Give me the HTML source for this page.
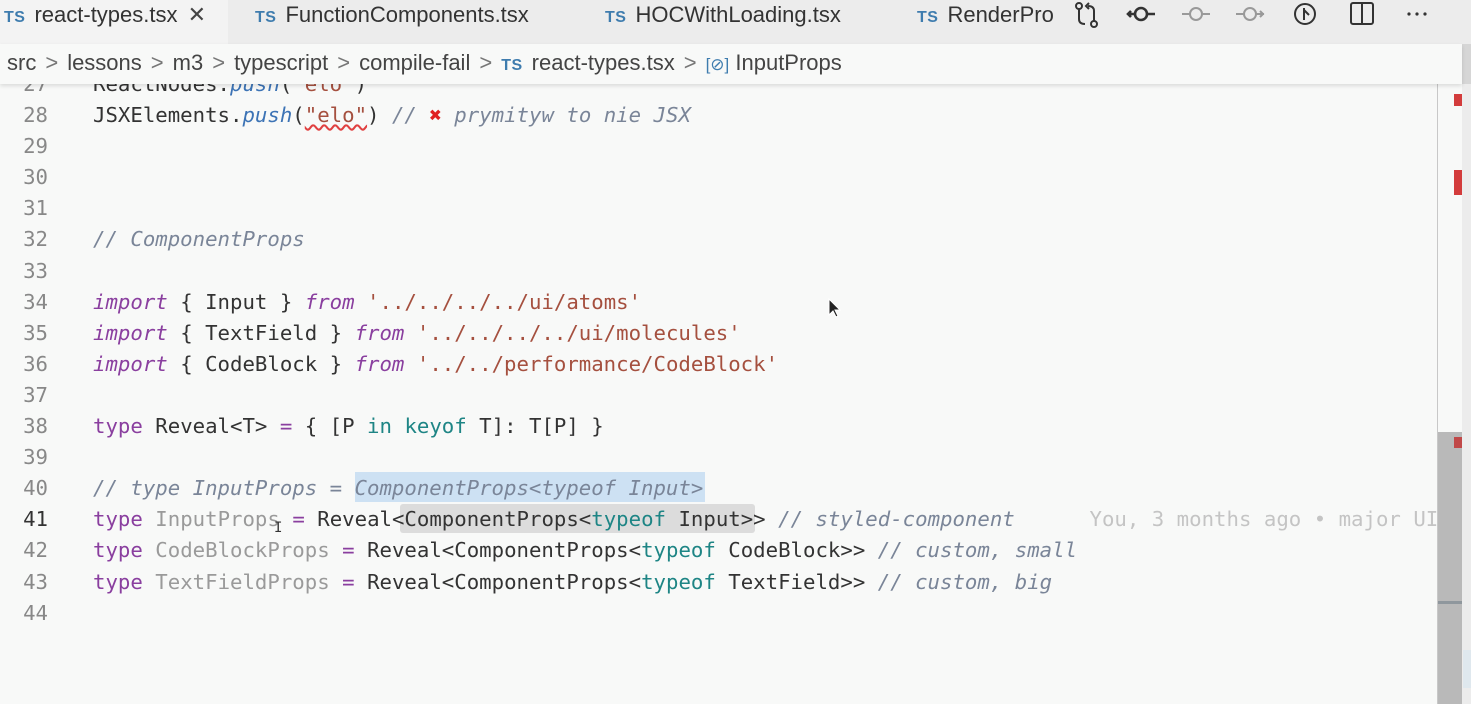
<!DOCTYPE html>
<html><head><meta charset="utf-8"><style>
*{margin:0;padding:0;box-sizing:border-box}
body{width:1471px;height:704px;overflow:hidden;background:#f8f9f8;position:relative;font-family:"Liberation Sans",sans-serif}
#tabs{position:absolute;left:0;top:0;width:1471px;height:44px;background:#ececec}
.tab{position:absolute;top:0;height:44px;line-height:30px;font-size:22px;color:#333;white-space:nowrap}
.ts{color:#3e7cae;font-size:16px;font-weight:bold;margin-right:9px;letter-spacing:0.5px}
#active{left:0;width:228px;background:#f3f3f3;padding-left:4px}
#crumb{position:absolute;left:0;top:44px;width:1462px;height:40px;background:#f8f9f8;font-size:22px;color:#444;line-height:38px;padding-left:7px;box-shadow:0 2px 4px rgba(0,0,0,0.12);z-index:5;white-space:nowrap}
.sep{color:#777;margin:0 9px}
#code{position:absolute;left:0;top:69px;width:1437px;font-family:"DejaVu Sans Mono","Liberation Mono",monospace;font-size:20.7px}
.l{height:31.1px;line-height:31.1px;white-space:pre;position:relative}
.n{position:absolute;left:0;width:48px;text-align:right;color:#888}
.c{position:absolute;left:93px;color:#333}
.kw{color:#8a3f9f}.im{color:#8a3f9f;font-style:italic}.st{color:#a5503f}.cm{color:#7a8598;font-style:italic}.tl{color:#1e8585}.dim{color:#9a9a9a}.fn{color:#3c73b5;font-style:italic}
#scroll{position:absolute;left:1437px;top:84px;width:1px;height:620px;background:#c8c8c8}
#rs{position:absolute;left:1462px;top:44px;width:9px;height:660px;background:#ececec}
</style></head><body>
<div id="tabs">
 <div class="tab" id="active"><span class="ts">TS</span>react-types.tsx <span style="margin-left:4px;color:#444">✕</span></div>
 <div class="tab" style="left:255px"><span class="ts">TS</span>FunctionComponents.tsx</div>
 <div class="tab" style="left:605px"><span class="ts">TS</span>HOCWithLoading.tsx</div>
 <div class="tab" style="left:917px;width:136px;overflow:hidden"><span class="ts">TS</span>RenderProps</div>
 <svg style="position:absolute;left:1070px;top:0" width="401" height="32" viewBox="0 0 401 32" fill="none" stroke="#333" stroke-width="2">
  <circle cx="9" cy="6" r="3"/><circle cx="24" cy="24" r="3"/><path d="M9 9v10c0 4 3 5 6 5M24 21V11c0-4-3-5-6-5M19 3l-3 3 3 3"/>
  <circle cx="71" cy="14" r="6" stroke-width="2.6"/><path d="M77 14h8M65 14h-7M61 11l-3 3 3 3" stroke-width="2.6"/>
  <g stroke="#999"><circle cx="126" cy="14" r="6"/><path d="M132 14h8M120 14h-8"/><circle cx="180" cy="14" r="6"/><path d="M186 14h8M174 14h-8M190 11l3 3-3 3"/></g>
  <circle cx="235" cy="14" r="10"/><path d="M234 8v12M234 10l5 5"/>
  <rect x="281" y="3" width="22" height="21" rx="2"/><path d="M292 3v21"/>
  <g fill="#333" stroke="none"><circle cx="339" cy="14" r="1.6"/><circle cx="347" cy="14" r="1.6"/><circle cx="355" cy="14" r="1.6"/></g>
 </svg>
</div>
<div id="crumb">src<span class="sep">&gt;</span>lessons<span class="sep">&gt;</span>m3<span class="sep">&gt;</span>typescript<span class="sep">&gt;</span>compile-fail<span class="sep">&gt;</span><span class="ts">TS</span>react-types.tsx<span class="sep">&gt;</span><span style="color:#3e7cae;font-size:17px">[⊘]</span> InputProps</div>
<div style="position:absolute;left:355px;top:472px;width:350px;height:30px;background:#cde1f3"></div>
<div style="position:absolute;left:400px;top:504px;width:355px;height:29px;background:#dcdcdc;border-radius:3px"></div>
<div id="code">
<div class="l"><span class="n">27</span><span class="c">ReactNodes.<span class="fn">push</span>(<span class="st">"elo"</span>)</span></div>
<div class="l"><span class="n">28</span><span class="c">JSXElements.<span class="fn">push</span>(<span class="st" style="text-decoration:underline wavy #e04040">"elo"</span>) <span class="cm">// <span style="color:#e02020;font-style:normal;font-weight:bold">✖</span> prymityw to nie JSX</span></span></div>
<div class="l"><span class="n">29</span></div>
<div class="l"><span class="n">30</span></div>
<div class="l"><span class="n">31</span></div>
<div class="l"><span class="n">32</span><span class="c"><span class="cm">// ComponentProps</span></span></div>
<div class="l"><span class="n">33</span></div>
<div class="l"><span class="n">34</span><span class="c"><span class="im">import</span> { Input } <span class="im">from</span> <span class="st">'../../../../ui/atoms'</span></span></div>
<div class="l"><span class="n">35</span><span class="c"><span class="im">import</span> { TextField } <span class="im">from</span> <span class="st">'../../../../ui/molecules'</span></span></div>
<div class="l"><span class="n">36</span><span class="c"><span class="im">import</span> { CodeBlock } <span class="im">from</span> <span class="st">'../../performance/CodeBlock'</span></span></div>
<div class="l"><span class="n">37</span></div>
<div class="l"><span class="n">38</span><span class="c"><span class="kw">type</span> Reveal&lt;T&gt; <span class="kw">=</span> { [P <span class="tl">in</span> <span class="tl">keyof</span> T]: T[P] }</span></div>
<div class="l"><span class="n">39</span></div>
<div class="l"><span class="n">40</span><span class="c"><span class="cm">// type InputProps = ComponentProps&lt;typeof Input&gt;</span></span></div>
<div class="l"><span class="n" style="color:#333">41</span><span class="c"><span class="kw">type</span> <span class="dim">InputProps</span> <span class="kw">=</span> Reveal&lt;ComponentProps&lt;<span class="tl">typeof</span> Input&gt;&gt; <span class="cm">// styled-component</span>      <span style="color:#c4c4c4">You, 3 months ago • major UI i</span></span></div>
<div class="l"><span class="n">42</span><span class="c"><span class="kw">type</span> <span class="dim">CodeBlockProps</span> <span class="kw">=</span> Reveal&lt;ComponentProps&lt;<span class="tl">typeof</span> CodeBlock&gt;&gt; <span class="cm">// custom, small</span></span></div>
<div class="l"><span class="n">43</span><span class="c"><span class="kw">type</span> <span class="dim">TextFieldProps</span> <span class="kw">=</span> Reveal&lt;ComponentProps&lt;<span class="tl">typeof</span> TextField&gt;&gt; <span class="cm">// custom, big</span></span></div>
<div class="l"><span class="n">44</span></div>
</div>
<div style="position:absolute;left:1438px;top:84px;width:33px;height:620px;background:#f8f9f8"></div>
<div id="scroll"></div>
<div style="position:absolute;left:1438px;top:432px;width:24px;height:272px;background:#b9b9b9"></div>
<div style="position:absolute;left:1438px;top:601px;width:24px;height:3px;background:#8f979d"></div>
<div id="rs"></div>
<div style="position:absolute;left:1462px;top:44px;width:9px;height:40px;background:#d6d6d6"></div>
<div style="position:absolute;left:1463px;top:650px;width:8px;height:38px;background:#dfe8ee"></div>
<div style="position:absolute;left:1454px;top:94px;width:8px;height:12px;background:#d33c3c"></div>
<div style="position:absolute;left:1454px;top:170px;width:8px;height:25px;background:#d33c3c"></div>
<div style="position:absolute;left:1454px;top:437px;width:8px;height:11px;background:#c04848"></div>
<svg style="position:absolute;left:828px;top:298px" width="14" height="22" viewBox="0 0 14 22"><path d="M1 1v16l4-4 3 6 2-1-3-6h5z" fill="#222" stroke="#fff" stroke-width="1"/></svg>
<div style="position:absolute;left:274px;top:520px;font-size:14px;color:#333;font-family:'DejaVu Sans Mono',monospace">I</div>
</body></html>
